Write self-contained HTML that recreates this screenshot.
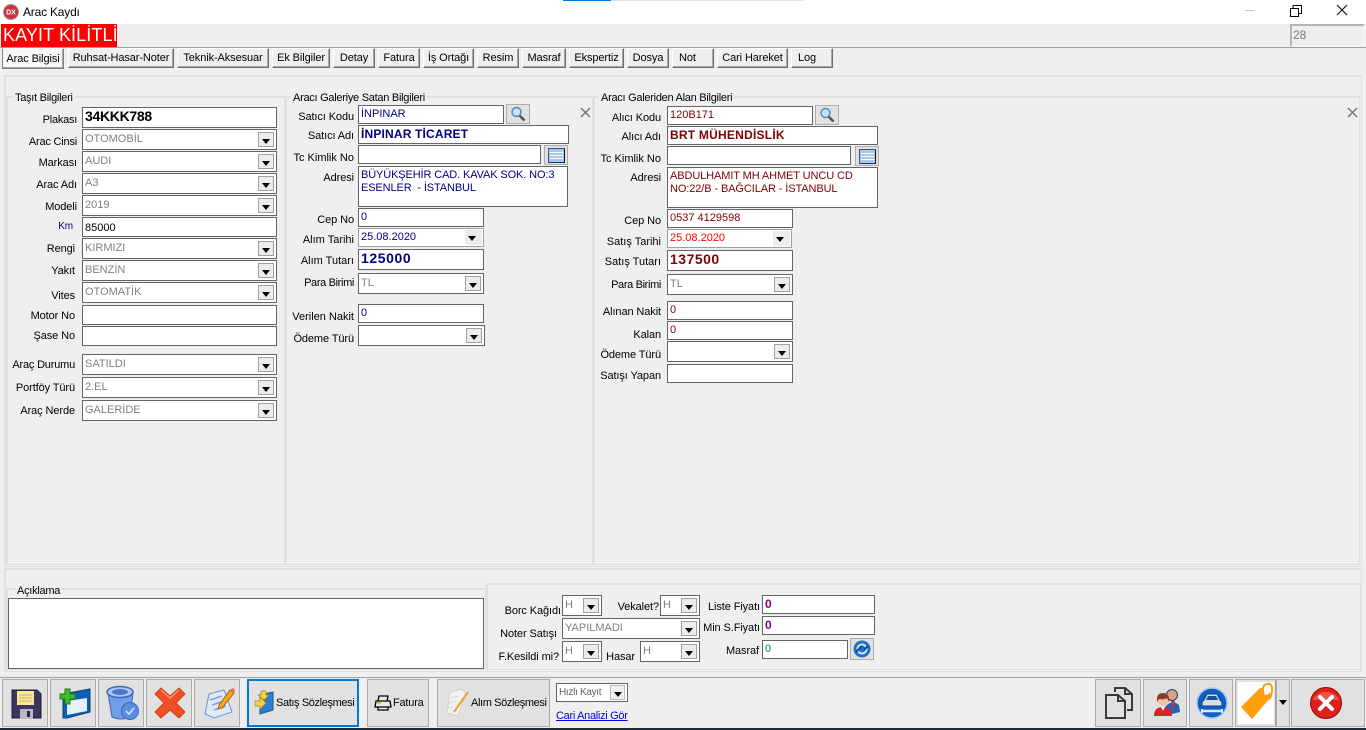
<!DOCTYPE html>
<html lang="tr"><head><meta charset="utf-8"><title>Arac Kaydı</title>
<style>
*{box-sizing:border-box}
html,body{margin:0;padding:0;width:1366px;height:730px;overflow:hidden;background:#efefef;font:11px/14px "Liberation Sans",sans-serif;color:#000}
div,a,svg,span.l{position:absolute}
.l{white-space:nowrap;text-align:right;width:110px;height:14px;letter-spacing:-.1px;margin-top:1px}
.t{white-space:nowrap;background:#efefef;padding:0 2px;height:14px;letter-spacing:-.27px;margin-top:1px}
.tab{top:48px;height:20px;background:#efefef;border:1px solid;border-color:#fff #6e6e6e #6e6e6e #fff;box-shadow:inset -1px -1px 0 #a8a8a8;text-align:center;line-height:19px;white-space:nowrap;letter-spacing:-.1px}
.g{border:2px solid #e0e0e0;border-right-width:1px;border-bottom-width:1px}
.i{background:#fff;border:1px solid #646464;padding:1px 0 0 2px;white-space:nowrap;overflow:hidden;line-height:14px}
.c{color:#808080;padding-top:2px}
.n{color:#000080}.r{color:#800000}
.b{font-weight:bold;font-size:14px;line-height:15px;letter-spacing:.5px;padding-top:1px}
.a{right:2px;top:2px;bottom:2px;width:16px;background:#ececec;border:1px solid #a0a0a0}
.a:after,.f:after{content:"";position:absolute;left:3px;top:6px;border:4px solid transparent;border-top:5px solid #000;border-bottom:0}
.f{right:2px;top:2px;bottom:2px;width:17px;background:#ececec}
.s{background:#e1e1e1;border:1px solid #adadad}
.x{background:#e1e1e1;border:1px solid #ababab;top:679px;height:48px}
.x>svg,.x>.bt{margin:1px 0 0 1px}
.bt{white-space:nowrap;height:14px;top:696px;letter-spacing:-.38px}
</style></head><body>

<div style="left:0;top:0;width:1366px;height:24px;background:#fff"></div>
<div style="left:563px;top:0;width:48px;height:1px;background:#0078d7"></div>
<div style="left:611px;top:0;width:193px;height:1px;background:#e4e4e4"></div>
<svg style="left:3px;top:4px" width="16" height="16" viewBox="0 0 16 16"><circle cx="8" cy="8" r="7.5" fill="#c9333f"/><circle cx="8" cy="8" r="7.5" fill="none" stroke="#999"/><text x="8" y="10.5" font-size="7" font-weight="bold" fill="#fff" text-anchor="middle" font-family="Liberation Sans">DX</text></svg>
<div style="left:23px;top:5px;white-space:nowrap;letter-spacing:-.2px;font-size:12px">Arac Kaydı</div>
<div style="left:1245px;top:10px;width:10px;height:1px;background:#c6c6c6"></div>
<svg style="left:1290px;top:5px" width="12" height="12" viewBox="0 0 12 12" fill="none" stroke="#000"><path d="M.5 3.5h8v8h-8zM3 3.5V.5h8.500v8H8.500"/></svg>
<svg style="left:1336px;top:4px" width="12" height="12" viewBox="0 0 12 12" fill="none" stroke="#000"><path d="M1 1l10 10M11 1L1 11"/></svg>

<div style="left:1px;top:24px;width:116px;height:23px;background:#fe0000;color:#fff;font-size:18px;line-height:23px;white-space:nowrap;padding-left:2px;letter-spacing:.1px">KAYIT KİLİTLİ</div>
<div style="left:1290px;top:24px;width:75px;height:23px;border:2px solid;border-color:#b4b4b4 #f4f4f4 #f4f4f4 #b4b4b4;background:#eeeeee;color:#777;padding:2px 0 0 1px;font-size:12px">28</div>
<div style="left:0;top:47px;width:1366px;height:1px;background:#a0a0a0"></div>

<div class="tab" style="left:2px;width:62px;height:21px;background:#f7f7f7;border-color:#fff #808080 #808080 #808080;line-height:20px">Arac Bilgisi</div>
<div class="tab" style="left:68px;width:106px">Ruhsat-Hasar-Noter</div>
<div class="tab" style="left:177px;width:92px">Teknik-Aksesuar</div>
<div class="tab" style="left:272px;width:58px">Ek Bilgiler</div>
<div class="tab" style="left:333px;width:42px">Detay</div>
<div class="tab" style="left:378px;width:42px">Fatura</div>
<div class="tab" style="left:423px;width:51px">İş Ortağı</div>
<div class="tab" style="left:477px;width:42px">Resim</div>
<div class="tab" style="left:522px;width:44px">Masraf</div>
<div class="tab" style="left:569px;width:55px">Ekspertiz</div>
<div class="tab" style="left:627px;width:42px">Dosya</div>
<div class="tab" style="left:672px;width:42px;text-align:left;padding-left:6px">Not</div>
<div class="tab" style="left:717px;width:71px">Cari Hareket</div>
<div class="tab" style="left:791px;width:42px;text-align:left;padding-left:6px">Log</div>

<div class="g" style="left:4px;top:75px;width:1358px;height:492px"></div>
<div class="g" style="left:6px;top:96px;width:279px;height:469px"></div>
<div class="g" style="left:285px;top:96px;width:308px;height:469px"></div>
<div class="g" style="left:593px;top:96px;width:767px;height:469px"></div>
<div class="t" style="left:13px;top:90px">Taşıt Bilgileri</div>
<div class="t" style="left:291px;top:90px">Aracı Galeriye Satan Bilgileri</div>
<div class="t" style="left:599px;top:90px">Aracı Galeriden Alan Bilgileri</div>

<!-- Left labels -->
<span class="l" style="left:-33px;top:112px;letter-spacing:-.25px">Plakası</span>
<span class="l" style="left:-33px;top:134px;letter-spacing:-.2px">Arac Cinsi</span>
<span class="l" style="left:-33px;top:155px">Markası</span>
<span class="l" style="left:-33px;top:177px">Arac Adı</span>
<span class="l" style="left:-33px;top:199px">Modeli</span>
<span class="l n" style="left:-37px;top:219px;font-size:10px">Km</span>
<span class="l" style="left:-35px;top:241px">Rengi</span>
<span class="l" style="left:-35px;top:263px">Yakıt</span>
<span class="l" style="left:-35px;top:288px">Vites</span>
<span class="l" style="left:-35px;top:308px">Motor No</span>
<span class="l" style="left:-35px;top:328px">Şase No</span>
<span class="l" style="left:-35px;top:357px;letter-spacing:-.2px">Araç Durumu</span>
<span class="l" style="left:-35px;top:380px">Portföy Türü</span>
<span class="l" style="left:-35px;top:403px">Araç Nerde</span>

<!-- Left fields -->
<div class="i b" style="left:82px;top:107px;width:195px;height:21px;letter-spacing:-.3px">34KKK788</div>
<div class="i c" style="left:82px;top:129px;width:195px;height:21px">OTOMOBİL<div class="a"></div></div>
<div class="i c" style="left:82px;top:151px;width:195px;height:21px">AUDI<div class="a"></div></div>
<div class="i c" style="left:82px;top:173px;width:195px;height:21px">A3<div class="a"></div></div>
<div class="i c" style="left:82px;top:195px;width:195px;height:21px">2019<div class="a"></div></div>
<div class="i" style="left:82px;top:217px;width:195px;height:20px;padding-top:3px">85000</div>
<div class="i c" style="left:82px;top:238px;width:195px;height:21px">KIRMIZI<div class="a"></div></div>
<div class="i c" style="left:82px;top:260px;width:195px;height:21px">BENZİN<div class="a"></div></div>
<div class="i c" style="left:82px;top:282px;width:195px;height:21px">OTOMATİK<div class="a"></div></div>
<div class="i" style="left:82px;top:305px;width:195px;height:20px"></div>
<div class="i" style="left:82px;top:326px;width:195px;height:20px"></div>
<div class="i c" style="left:82px;top:354px;width:195px;height:21px">SATILDI<div class="a"></div></div>
<div class="i c" style="left:82px;top:377px;width:195px;height:21px">2.EL<div class="a"></div></div>
<div class="i c" style="left:82px;top:400px;width:195px;height:21px">GALERİDE<div class="a"></div></div>

<!-- Middle labels -->
<span class="l" style="left:244px;top:109px">Satıcı Kodu</span>
<span class="l" style="left:244px;top:128px">Satıcı Adı</span>
<span class="l" style="left:244px;top:150px;letter-spacing:0">Tc Kimlik No</span>
<span class="l" style="left:244px;top:170px">Adresi</span>
<span class="l" style="left:244px;top:212px">Cep No</span>
<span class="l" style="left:244px;top:232px;letter-spacing:0">Alım Tarihi</span>
<span class="l" style="left:244px;top:253px;letter-spacing:0">Alım Tutarı</span>
<span class="l" style="left:244px;top:275px;letter-spacing:-.35px">Para Birimi</span>
<span class="l" style="left:244px;top:309px;letter-spacing:0">Verilen Nakit</span>
<span class="l" style="left:244px;top:331px">Ödeme Türü</span>

<!-- Middle fields -->
<div class="i n" style="left:358px;top:105px;width:146px;height:19px">İNPINAR</div>
<div class="s" style="left:506px;top:104px;width:24px;height:20px"><svg style="left:3px;top:1px" width="17" height="16" viewBox="0 0 17 16"><path d="M9.500 9.500l5 5" stroke="#555" stroke-width="2.500"/><circle cx="6.500" cy="6" r="4.500" fill="#bfe3fa" stroke="#4f86b8" stroke-width="1.400"/></svg></div>
<svg style="left:580px;top:107px" width="11" height="11" viewBox="0 0 11 11"><path d="M1 1l9 9M10 1l-9 9" stroke="#777" stroke-width="1.500"/></svg>
<div class="i n b" style="left:358px;top:125px;width:211px;height:19px;font-size:12px;line-height:14px;letter-spacing:.17px;padding-top:1px">İNPINAR TİCARET</div>
<div class="i" style="left:358px;top:145px;width:183px;height:19px"></div>
<div class="s" style="left:544px;top:145px;width:24px;height:20px"><svg style="left:3px;top:2px" width="17" height="15" viewBox="0 0 17 15"><rect x=".5" y=".5" width="16" height="14" fill="#a9c8ea" stroke="#2c5a96"/><path d="M2 4.500h13M2 7.500h13M2 10.500h13" stroke="#fff"/><path d="M16.500 1v14H1" stroke="#111" fill="none"/></svg></div>
<div class="i n" style="left:358px;top:166px;width:210px;height:41px;line-height:13px;letter-spacing:-.12px;padding-top:2px">BÜYÜKŞEHİR CAD. KAVAK SOK. NO:3<br>ESENLER &nbsp;- İSTANBUL</div>
<div class="i n" style="left:358px;top:208px;width:126px;height:19px">0</div>
<div class="i n" style="left:358px;top:228px;width:126px;height:19px;border-color:#a0a0a0">25.08.2020<div class="f" style="right:1px;top:1px;bottom:1px"></div></div>
<div class="i n b" style="left:358px;top:249px;width:126px;height:21px;letter-spacing:.6px">125000</div>
<div class="i c" style="left:358px;top:273px;width:126px;height:21px">TL<div class="a"></div></div>
<div class="i n" style="left:358px;top:304px;width:126px;height:19px">0</div>
<div class="i" style="left:358px;top:325px;width:127px;height:21px"><div class="a"></div></div>

<!-- Right labels -->
<span class="l" style="left:551px;top:110px">Alıcı Kodu</span>
<span class="l" style="left:551px;top:129px">Alıcı Adı</span>
<span class="l" style="left:551px;top:151px;letter-spacing:0">Tc Kimlik No</span>
<span class="l" style="left:551px;top:170px">Adresi</span>
<span class="l" style="left:551px;top:213px">Cep No</span>
<span class="l" style="left:551px;top:234px;letter-spacing:0">Satış Tarihi</span>
<span class="l" style="left:551px;top:254px;letter-spacing:0">Satış Tutarı</span>
<span class="l" style="left:551px;top:277px;letter-spacing:-.35px">Para Birimi</span>
<span class="l" style="left:551px;top:304px">Alınan Nakit</span>
<span class="l" style="left:551px;top:327px">Kalan</span>
<span class="l" style="left:551px;top:347px">Ödeme Türü</span>
<span class="l" style="left:551px;top:368px">Satışı Yapan</span>

<!-- Right fields -->
<div class="i r" style="left:667px;top:106px;width:146px;height:19px">120B171</div>
<div class="s" style="left:815px;top:105px;width:24px;height:20px"><svg style="left:3px;top:1px" width="17" height="16" viewBox="0 0 17 16"><path d="M9.500 9.500l5 5" stroke="#555" stroke-width="2.500"/><circle cx="6.500" cy="6" r="4.500" fill="#bfe3fa" stroke="#4f86b8" stroke-width="1.400"/></svg></div>
<svg style="left:1347px;top:107px" width="11" height="11" viewBox="0 0 11 11"><path d="M1 1l9 9M10 1l-9 9" stroke="#777" stroke-width="1.500"/></svg>
<div class="i r b" style="left:667px;top:126px;width:211px;height:19px;font-size:12px;line-height:14px;letter-spacing:.23px;padding-top:1px">BRT MÜHENDİSLİK</div>
<div class="i" style="left:667px;top:146px;width:184px;height:19px"></div>
<div class="s" style="left:855px;top:146px;width:24px;height:20px"><svg style="left:3px;top:2px" width="17" height="15" viewBox="0 0 17 15"><rect x=".5" y=".5" width="16" height="14" fill="#a9c8ea" stroke="#2c5a96"/><path d="M2 4.500h13M2 7.500h13M2 10.500h13" stroke="#fff"/><path d="M16.500 1v14H1" stroke="#111" fill="none"/></svg></div>
<div class="i r" style="left:667px;top:167px;width:211px;height:41px;line-height:13px;letter-spacing:-.1px;padding-top:2px">ABDULHAMIT MH AHMET UNCU CD<br>NO:22/B - BAĞCILAR - İSTANBUL</div>
<div class="i r" style="left:667px;top:209px;width:126px;height:19px">0537 4129598</div>
<div class="i" style="left:667px;top:229px;width:125px;height:19px;border-color:#a0a0a0;color:#f00">25.08.2020<div class="f" style="right:1px;top:1px;bottom:1px"></div></div>
<div class="i r b" style="left:667px;top:250px;width:126px;height:21px">137500</div>
<div class="i c" style="left:667px;top:274px;width:126px;height:21px">TL<div class="a"></div></div>
<div class="i r" style="left:667px;top:301px;width:126px;height:19px">0</div>
<div class="i r" style="left:667px;top:321px;width:126px;height:19px">0</div>
<div class="i" style="left:667px;top:341px;width:126px;height:21px"><div class="a"></div></div>
<div class="i" style="left:667px;top:364px;width:126px;height:19px"></div>

<!-- Lower panels -->
<div class="g" style="left:4px;top:568px;width:1358px;height:104px"></div>
<div class="g" style="left:6px;top:588px;width:480px;height:82px"></div>
<div class="t" style="left:15px;top:583px">Açıklama</div>
<div class="i" style="left:8px;top:598px;width:476px;height:71px"></div>
<div class="g" style="left:486px;top:583px;width:875px;height:87px"></div>

<span class="l" style="left:451px;top:603px">Borc Kağıdı</span>
<span class="l" style="left:549px;top:599px">Vekalet?</span>
<span class="l" style="left:447px;top:626px">Noter Satışı</span>
<span class="l" style="left:449px;top:649px">F.Kesildi mi?</span>
<span class="l" style="left:525px;top:649px">Hasar</span>
<span class="l" style="left:650px;top:599px">Liste Fiyatı</span>
<span class="l" style="left:650px;top:620px">Min S.Fiyatı</span>
<span class="l" style="left:649px;top:643px">Masraf</span>

<div class="i c" style="left:562px;top:595px;width:40px;height:21px">H<div class="a"></div></div>
<div class="i c" style="left:660px;top:595px;width:40px;height:21px">H<div class="a"></div></div>
<div class="i c" style="left:562px;top:618px;width:138px;height:21px">YAPILMADI<div class="a"></div></div>
<div class="i c" style="left:562px;top:641px;width:40px;height:21px">H<div class="a"></div></div>
<div class="i c" style="left:640px;top:641px;width:60px;height:21px">H<div class="a"></div></div>
<div class="i b" style="left:762px;top:595px;width:113px;height:19px;color:#800080;font-size:12px;line-height:14px">0</div>
<div class="i b" style="left:762px;top:616px;width:113px;height:19px;color:#800080;font-size:12px;line-height:14px">0</div>
<div class="i" style="left:762px;top:640px;width:86px;height:19px;color:#008080">0</div>
<div class="s" style="left:850px;top:638px;width:24px;height:22px"><svg style="left:2px;top:1px" width="18" height="18" viewBox="0 0 18 18"><circle cx="9" cy="9" r="8.500" fill="#1f6fc4"/><circle cx="9" cy="9" r="4.500" fill="none" stroke="#cfe6fa" stroke-width="2"/><path d="M3 12l6-6M15 6l-4 4" stroke="#0b4c94" stroke-width="2"/></svg></div>

<!-- Bottom toolbar -->
<div style="left:0;top:677px;width:1366px;height:1px;background:#a0a0a0"></div>
<div class="x" style="left:2px;width:46px"><svg style="left:6px;top:6px" width="32" height="33" viewBox="0 0 32 33"><path d="M2 3h25l4 4v24H2z" fill="#3c3560" stroke="#1d1a33"/><path d="M7 4h17v14H7z" fill="#f7e79a"/><path d="M9 8h13M9 11h13M9 14h13" stroke="#c9b560"/><path d="M10 22h13v10H10z" fill="#b9b5c8"/><path d="M17 24h3v6h-3z" fill="#2b2845"/></svg></div>
<div class="x" style="left:50px;width:46px"><svg style="left:5px;top:5px" width="34" height="34" viewBox="0 0 34 34"><path d="M6 8l27-5v23L10 32H6z" fill="#0d5fb5" stroke="#073f7e"/><path d="M10 15l20-3v13L10 29z" fill="#e9f2fb"/><path d="M8 3h5v5h5v5h-5v5H8v-5H3V8h5z" fill="#3fbb2c" stroke="#1f7d12"/></svg></div>
<div class="x" style="left:98px;width:46px"><svg style="left:5px;top:4px" width="34" height="36" viewBox="0 0 34 36"><path d="M3 8l4 24q9 4 18 0l3-24z" fill="#6f9ee8" stroke="#3d66b5"/><ellipse cx="15" cy="7" rx="13" ry="5.500" fill="#a9c7f3" stroke="#3d66b5" stroke-width="1.500"/><ellipse cx="15" cy="7" rx="8" ry="3" fill="#4d78c9"/><circle cx="25" cy="26" r="8.500" fill="#5d8de0" stroke="#3d66b5"/><path d="M21 26l3 3 5-6" fill="none" stroke="#dbe8fb" stroke-width="1.500"/></svg></div>
<div class="x" style="left:146px;width:46px"><svg style="left:6px;top:6px" width="32" height="32" viewBox="0 0 32 32"><path d="M7 1l9 8 9-8 6 6-9 9 9 9-6 6-9-8-9 8-6-6 9-9-9-9z" fill="#ee5026" stroke="#d83d14"/><path d="M7 3l9 8 9-8" fill="none" stroke="#ff9a6b" stroke-width="1.500"/></svg></div>
<div class="x" style="left:194px;width:46px"><svg style="left:6px;top:5px" width="34" height="34" viewBox="0 0 34 34"><path d="M7 8l15-4 8 22-18 6-9-4z" fill="#dfe9f8" stroke="#6f94cf"/><path d="M8 14l12-4M10 19l12-4M12 24l12-4" stroke="#7fa3dc" stroke-width="1.500"/><path d="M17 19L28 4l4 3-12 15-4 1z" fill="#f6a623" stroke="#9c6408"/><path d="M28 4l4 3 1-3-2-2z" fill="#e9705a"/></svg></div>
<div class="x" style="left:247px;width:112px;border:2px solid #0078d7"><svg style="left:3px;top:8px" width="22" height="26" viewBox="0 0 22 26"><path d="M7 5l13-3v18L7 24z" fill="#2c7fd0" stroke="#125798"/><path d="M8 1h5v4h3l-5 5-6-5h3zM2 11h5V7l6 6-6 6v-3H2z" fill="#f7d24b" stroke="#a78214" stroke-width=".7"/></svg><div class="bt" style="left:26px;top:14px">Satış Sözleşmesi</div></div>
<div class="x" style="left:367px;width:62px"><svg style="left:5px;top:14px" width="18" height="16" viewBox="0 0 18 16"><path d="M5 1h9l-1 5H4zM2 6h14l1 6H1zM4 12h10v3H4z" fill="#e8e8e8" stroke="#000" stroke-width="1.300"/><path d="M3 8h4" stroke="#e8c020" stroke-width="2"/></svg><div class="bt" style="left:24px;top:15px;letter-spacing:-.2px">Fatura</div></div>
<div class="x" style="left:437px;width:113px"><svg style="left:5px;top:5px" width="26" height="34" viewBox="0 0 26 34"><path d="M6 6l12-3 4 5-8 22-11-3z" fill="#f2f2f2" stroke="#d0d0d0"/><path d="M7 12l8-2M5 17l7-2M4 22l5-1" stroke="#d8d8d8"/><path d="M10 26L24 6" stroke="#e8a52c" stroke-width="2"/></svg><div class="bt" style="left:32px;top:15px">Alım Sözleşmesi</div></div>

<div class="i" style="left:556px;top:683px;width:72px;height:19px;color:#6b6050;font-size:10px;line-height:15px;letter-spacing:-.3px;padding-top:1px">Hızlı Kayıt<div class="a" style="top:1px;bottom:1px;width:15px;background:#efefef;border-color:#bbb"></div></div>
<a style="left:556px;top:709px;color:#0000e0;text-decoration:underline;white-space:nowrap;letter-spacing:-.3px;font-size:11px">Cari Analizi Gör</a>

<div class="x" style="left:1095px;width:46px"><svg style="left:7px;top:6px" width="30" height="32" viewBox="0 0 30 32" fill="none" stroke="#3a3a3a" stroke-width="2"><path d="M11 5V1h10l7 6v16h-5"/><path d="M21 1v6h7"/><path d="M2 8h12l7 6v17H2z" fill="#e1e1e1"/><path d="M14 8v6h7"/></svg></div>
<div class="x" style="left:1143px;width:44px"><svg style="left:8px;top:5px" width="28" height="34" viewBox="0 0 28 34"><circle cx="19" cy="9" r="5.500" fill="#d6a487" stroke="#223e7e"/><path d="M12 21q7-8 14-2l1 7-12 3z" fill="#2560b8"/><path d="M18 15l2 10 2-10z" fill="#c9342c"/><circle cx="10" cy="14" r="5.500" fill="#edc2a4"/><path d="M4 16q-1-9 6-9t6 9l-2-4q-3 2-8 1z" fill="#8a3b2b"/><path d="M1 30q0-9 9-9t9 9z" fill="#d8232a"/><path d="M8 21l2 4 2-4z" fill="#fff"/></svg></div>
<div class="x" style="left:1189px;width:44px"><svg style="left:5px;top:4px" width="32" height="36" viewBox="0 0 32 36"><circle cx="16" cy="18" r="15" fill="#1060c4" stroke="#a9c6ea" stroke-width="1.500"/><path d="M8 15l3-6h10l3 6 2 2v4H6v-4z" fill="#d7e0ea" stroke="#0b3c80"/><path d="M10 15l2-4h8l2 4z" fill="#1a4d9a"/><path d="M6 26h20" stroke="#e3e9f0" stroke-width="2.500"/><path d="M6 24v4M26 24v4" stroke="#e3e9f0" stroke-width="2"/></svg></div>
<div class="x" style="left:1235px;width:55px"><div style="left:2px;top:2px;width:36px;height:42px;background:#fff"></div><svg style="left:2px;top:1px" width="36" height="42" viewBox="0 0 36 42"><path d="M2 25L21 6l9 1 2 8-19 22z" fill="#ff9f0a"/><circle cx="27" cy="9" r="4" fill="#fff"/><path d="M25 13q-3-10 3-11t5 7-4 8" fill="none" stroke="#ff9f0a" stroke-width="2"/></svg><div style="left:39px;top:0;width:2px;height:46px;background:#a8a8a8"></div><div style="left:43px;top:20px;border:4px solid transparent;border-top:5px solid #000;border-bottom:0"></div></div>
<div class="x" style="left:1291px;width:74px"><svg style="left:16px;top:5px" width="34" height="34" viewBox="0 0 34 34"><circle cx="17" cy="17" r="15.500" fill="#df1f1a" stroke="#8e0f0a"/><path d="M4 14a13.500 11 0 0 1 26 0" fill="#f3736c" opacity=".6"/><path d="M11 11l12 12M23 11L11 23" stroke="#fff" stroke-width="4" stroke-linecap="round"/></svg></div>

<div style="left:0;top:728px;width:1366px;height:2px;background:#1b2b38"></div>
</body></html>
